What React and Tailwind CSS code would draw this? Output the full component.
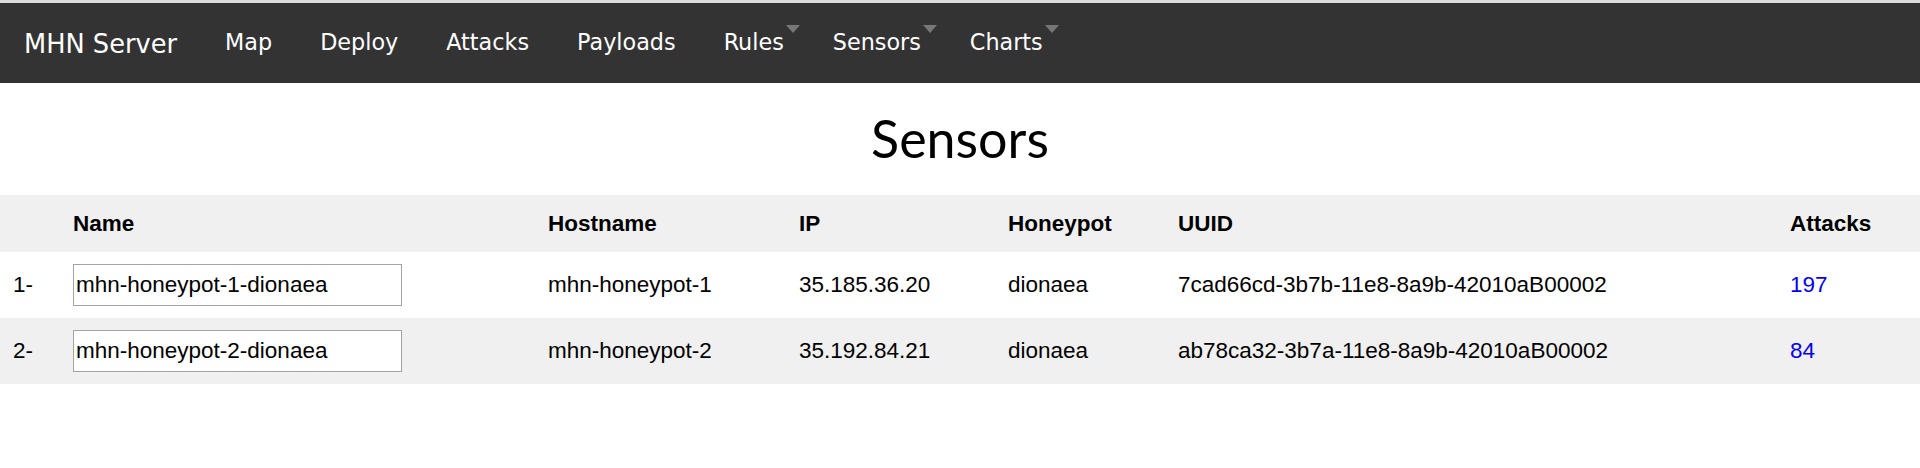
import React from "react";

const navItems = [
  { label: "Map" },
  { label: "Deploy" },
  { label: "Attacks" },
  { label: "Payloads" },
  { label: "Rules", caret: true },
  { label: "Sensors", caret: true },
  { label: "Charts", caret: true },
];

const sensors = [
  {
    n: "1-",
    name: "mhn-honeypot-1-dionaea",
    host: "mhn-honeypot-1",
    ip: "35.185.36.20",
    hp: "dionaea",
    uuid: "7cad66cd-3b7b-11e8-8a9b-42010aB00002",
    attacks: "197",
  },
  {
    n: "2-",
    name: "mhn-honeypot-2-dionaea",
    host: "mhn-honeypot-2",
    ip: "35.192.84.21",
    hp: "dionaea",
    uuid: "ab78ca32-3b7a-11e8-8a9b-42010aB00002",
    attacks: "84",
  },
];

const cols = "grid grid-cols-[73px_475px_251px_209px_170px_612px_1fr] items-center";

export default function App() {
  return (
    <div className="min-h-[468px] bg-white">
      <div className="h-[3px] bg-[#dcdcdc]" />
      <nav className="h-[80px] bg-[#333333] flex items-start pl-[24px] font-['DejaVu_Sans',sans-serif] text-white">
        <a className="pt-[27px] pr-[24px] text-[25.7px] leading-[29px] whitespace-nowrap">MHN Server</a>
        {navItems.map((it) => (
          <a
            key={it.label}
            className={`pl-[24px] ${it.caret ? "pr-[25px]" : "pr-[24px]"} pt-[26px] text-[22.3px] leading-[26px] whitespace-nowrap`}
          >
            <span className="relative">
              {it.label}
              {it.caret && (
                <span className="absolute left-[calc(100%+2px)] top-[-4px] w-0 h-0 border-l-[7px] border-r-[7px] border-t-[8px] border-l-transparent border-r-transparent border-t-[#777777]" />
              )}
            </span>
          </a>
        ))}
      </nav>
      <h1 className="text-center font-['Lato',sans-serif] font-normal text-[52px] leading-[62px] pt-[24px] pb-[26px] text-black">
        Sensors
      </h1>
      <div className="font-['Liberation_Sans',Arial,sans-serif] text-[22.5px] leading-[26px] text-black">
        <div className={`${cols} h-[57px] bg-[#f0f0f0] font-bold`}>
          <div />
          <div>Name</div>
          <div>Hostname</div>
          <div>IP</div>
          <div>Honeypot</div>
          <div>UUID</div>
          <div>Attacks</div>
        </div>
        {sensors.map((s, i) => (
          <div key={s.n} className={`${cols} h-[66px] ${i % 2 === 1 ? "bg-[#f0f0f0]" : "bg-white"}`}>
            <div className="pl-[13px]">{s.n}</div>
            <div>
              <input
                readOnly
                value={s.name}
                className="w-[329px] h-[42px] border border-[#a3a3a3] bg-white px-[2px] text-[22.5px] font-['Liberation_Sans',Arial,sans-serif] text-black outline-none"
              />
            </div>
            <div>{s.host}</div>
            <div>{s.ip}</div>
            <div>{s.hp}</div>
            <div className="whitespace-nowrap">{s.uuid}</div>
            <div>
              <a className="text-[#0000ee]">{s.attacks}</a>
            </div>
          </div>
        ))}
      </div>
    </div>
  );
}
